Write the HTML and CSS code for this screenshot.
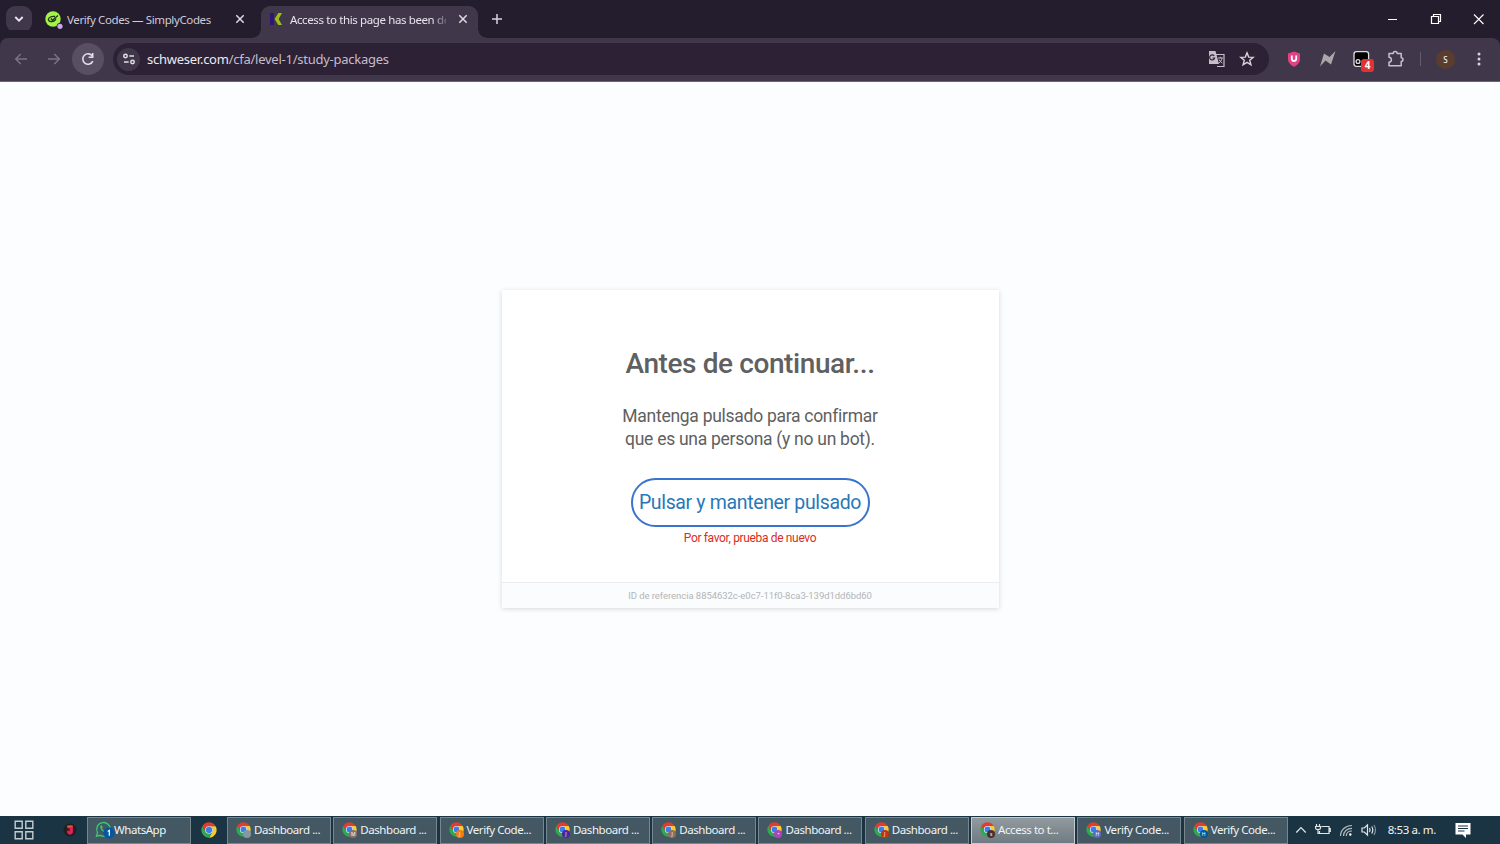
FILE: index.html
```html
<!DOCTYPE html>
<html lang="es">
<head>
    <meta charset="UTF-8">
    <meta name="viewport" content="width=device-width, initial-scale=1.0">
    <title>Access to this page has been denied</title>
    <link rel="stylesheet" href="styles.css">
</head>
<body>
    <svg class="defs" width="0" height="0">
        <symbol id="chrome" viewBox="0 0 48 48">
            <path d="M4.1 12.5A23 23 0 0 1 43.9 12.5H24A11.5 11.5 0 0 0 14 29.8Z" fill="#e33b2e"/>
            <path d="M43.9 12.5A23 23 0 0 1 24 47L34 29.7A11.5 11.5 0 0 0 24 12.5Z" fill="#fcc934"/>
            <path d="M24 47A23 23 0 0 1 4.1 12.5L14 29.8A11.5 11.5 0 0 0 34 29.7Z" fill="#2da94f"/>
            <circle cx="24" cy="24" r="11.5" fill="#fff"/>
            <circle cx="24" cy="24" r="9.500" fill="#3b7ded"/>
        </symbol>
        <symbol id="close" viewBox="0 0 10 10">
            <path d="M1.3 1.3l7.4 7.4M8.7 1.3L1.3 8.7" fill="none" stroke="#e0dae3" stroke-width="1.5"/>
        </symbol>
    </svg>

    <div class="tabs">
        <div class="tab-search">
            <svg width="10" height="8" viewBox="0 0 10 8"><path d="M1.3 2L5 5.7 8.7 2" fill="none" stroke="#ece6ef" stroke-width="1.8"/></svg>
        </div>
        <div class="tab">
            <svg class="favicon" width="18" height="18" viewBox="0 0 18 18">
                <circle cx="8" cy="8" r="7.7" fill="#a5f346"/>
                <path d="M10 5.5C6.5 5 3.6 6.3 3.4 8.4 3.3 11.6 9.8 11.4 11 7.6M5.8 7.5l1.6 1.8L13 4.6" fill="none" stroke="#223717" stroke-width="1.3"/>
                <circle cx="15" cy="15.3" r="3.2" fill="#241d2e"/>
                <circle cx="15" cy="15.3" r="2.6" fill="#c9a6ee"/>
            </svg>
            <span class="tab-title">Verify Codes — SimplyCodes</span>
            <svg class="tab-close" width="10" height="10"><use href="#close"/></svg>
        </div>
        <div class="tab active">
            <svg class="favicon" width="12" height="14" viewBox="0 0 12 14">
                <path d="M0 1h4v12H0z" fill="#2c1679"/>
                <path d="M8.3 1H12L8.6 7 12 13H8.3L4.6 7z" fill="#9dbd18"/>
            </svg>
            <span class="tab-title">Access to this page has been denied</span>
            <svg class="tab-close" width="10" height="10"><use href="#close"/></svg>
        </div>
        <svg class="new-tab" width="12" height="12" viewBox="0 0 12 12"><path d="M6 1v10M1 6h10" stroke="#d9d3dd" stroke-width="1.5"/></svg>
        <div class="window-buttons">
            <svg width="43" height="20" viewBox="0 0 43 20"><path d="M17 10.5h9" stroke="#fff"/></svg>
            <svg width="43" height="20" viewBox="0 0 43 20"><path d="M17.5 7.5h7v7h-7zM19.5 7.5v-2h7v7h-2" fill="none" stroke="#fff" stroke-width="1.2"/></svg>
            <svg width="43" height="20" viewBox="0 0 43 20"><path d="M17 5.5l9.5 9.5M26.5 5.5L17 15" stroke="#fff" stroke-width="1.1"/></svg>
        </div>
    </div>

    <div class="toolbar">
        <div class="nav-button">
            <svg width="14" height="12" viewBox="0 0 14 12"><path d="M13 6H2M6.7 1L1.7 6l5 5" fill="none" stroke="#7c7285" stroke-width="1.5"/></svg>
        </div>
        <div class="nav-button">
            <svg width="14" height="12" viewBox="0 0 14 12"><path d="M1 6h11M7.3 1l5 5-5 5" fill="none" stroke="#7c7285" stroke-width="1.5"/></svg>
        </div>
        <div class="nav-button reload">
            <svg width="14" height="14" viewBox="0 0 14 14"><path d="M11.8 9.1A5.2 5.2 0 1 1 11.4 4.2" fill="none" stroke="#e4dfe7" stroke-width="1.6"/><path d="M12.5 1v5H7.6V4.5h3.3V1z" fill="#e4dfe7"/></svg>
        </div>
        <div class="address">
            <div class="site-info">
                <svg width="12" height="12" viewBox="0 0 12 12" fill="none" stroke="#e4dfe7" stroke-width="1.5"><circle cx="2.5" cy="3" r="1.7"/><path d="M6.3 3H11M1 9h4.7"/><circle cx="9.5" cy="9" r="1.7"/></svg>
            </div>
            <span class="url"><b>schweser.com</b>/cfa/level-1/study-packages</span>
            <svg width="30" height="18" viewBox="0 0 30 18">
                <path d="M13 4.5h9v12h-7" fill="none" stroke="#c6bfca" stroke-width="1.2"/>
                <path d="M7 1h6.5l3.5 13H7z" fill="#c6bfca"/>
                <path d="M12.2 6A2.5 2.5 0 1 0 12.6 8H10.5" fill="none" stroke="#302638" stroke-width="1.2"/>
                <path d="M16 8h5M18.3 6.8V8M20 8c-.5 2.500-1.700 4-3 5M17 9.500c.7 1.500 2 2.700 3.300 3.500" fill="none" stroke="#c6bfca"/>
            </svg>
            <svg width="30" height="18" viewBox="0 0 30 18"><path d="M15 2.8l1.7 4.300 4.500.3-3.500 2.900 1.200 4.500L15 12.300l-3.900 2.500 1.200-4.500-3.500-2.900 4.500-.3z" fill="none" stroke="#d9d3dd" stroke-width="1.4"/></svg>
        </div>
        <div class="extensions">
            <svg width="34" height="24" viewBox="0 0 34 24">
                <path d="M17 4.500l6 2v5.500c0 3.800-3 6.500-6 7.700-3-1.200-6-3.900-6-7.700V6.500z" fill="#e64084"/>
                <path d="M14.800 8.500v3.200a2.200 2.200 0 0 0 4.400 0V8.500" fill="none" stroke="#fff" stroke-width="1.8"/>
            </svg>
            <svg width="34" height="24" viewBox="0 0 34 24"><path d="M9 19.500L13 6.500l5.500 3.500L24.500 4 20 17.500 14.500 13.500z" fill="#aaa6a9"/></svg>
            <div class="extension">
                <svg width="34" height="24" viewBox="0 0 34 24">
                    <rect x="9" y="4.700" width="14.600" height="14.600" rx="2.500" fill="#000" stroke="#ddd" stroke-width="1.3"/>
                    <circle cx="13" cy="14.500" r="1.900" fill="none" stroke="#ddd" stroke-width="1.3"/>
                </svg>
                <span class="count">4</span>
            </div>
            <svg width="34" height="24" viewBox="0 0 34 24"><path d="M10 6.500h4.200c0-2.800 4-2.800 4 0h4v4.300c2.400 0 2.400 3.600 0 3.600v4.300H10v-3.500c3.200-.5 3.200-4.600 0-5z" fill="none" stroke="#c8c1cd" stroke-width="1.5" stroke-linejoin="round"/></svg>
        </div>
        <span class="separator"></span>
        <span class="profile">S</span>
        <svg class="menu" width="4" height="14" viewBox="0 0 4 14" fill="#d9d3dd"><circle cx="2" cy="2" r="1.5"/><circle cx="2" cy="7" r="1.5"/><circle cx="2" cy="12" r="1.5"/></svg>
    </div>

    <main class="page">
        <div class="card">
            <div class="card-body">
                <h1>Antes de continuar...</h1>
                <p class="text">Mantenga pulsado para confirmar<br>que es una persona (y no un bot).</p>
                <button class="hold">Pulsar y mantener pulsado</button>
                <p class="error">Por favor, prueba de nuevo</p>
            </div>
            <div class="card-footer">ID de referencia 8854632c-e0c7-11f0-8ca3-139d1dd6bd60</div>
        </div>
    </main>

    <div class="taskbar">
        <svg class="start" width="20" height="20" viewBox="0 0 20 20" fill="none" stroke="#c5cdd1" stroke-width="1.4"><path d="M1.2 1.2h7v7h-7zM11.8 1.2h7v7h-7zM1.2 11.8h7v7h-7zM11.8 11.8h7v7h-7z"/></svg>
        <svg class="app-j" width="14" height="14" viewBox="0 0 14 14"><circle cx="7" cy="7" r="6.5" fill="#261d20"/><path d="M4.500 3H9.500v6.300c0 2.500-5 2.500-5 0V8h1.500v1h1V5H4.500z" fill="#df245b" stroke="#df245b" stroke-width=".8"/><path d="M4.500 2.600h5v1.200h-5z" fill="#ec6b2c"/></svg>
        <div class="task whatsapp">
            <svg width="20" height="18" viewBox="0 0 20 18">
                <path d="M1.5 15.300l1-3.700A6.800 6.800 0 1 1 5.200 14.300z" fill="none" stroke="#36c874" stroke-width="1.4"/>
                <path d="M5.500 4.800c.8-1 1.500-.5 2.200 1.400L7 7.400c.6 1.200 1.500 2 2.600 2.500l1-1c2 .8 2.200 1.300.8 2.300-2.500 1.200-7.500-3.500-5.900-6.400z" fill="#36c874"/>
                <circle cx="14" cy="12" r="5.700" fill="#0756a0"/>
                <path d="M12.700 10.400l1.600-1.100v5.400" fill="none" stroke="#fff" stroke-width="1.2"/>
            </svg>
            <span>WhatsApp</span>
        </div>
        <svg class="app-chrome" width="16" height="16"><use href="#chrome"/></svg>
        <div class="tasks">
            <div class="task"><i class="browser"><svg width="15" height="15"><use href="#chrome"/></svg><em class="gray"></em></i><span>Dashboard ...</span></div>
            <div class="task"><i class="browser"><svg width="15" height="15"><use href="#chrome"/></svg><em class="taupe">M</em></i><span>Dashboard ...</span></div>
            <div class="task"><i class="browser"><svg width="15" height="15"><use href="#chrome"/></svg><em class="orange">J</em></i><span>Verify Code...</span></div>
            <div class="task"><i class="browser"><svg width="15" height="15"><use href="#chrome"/></svg><em class="indigo">J</em></i><span>Dashboard ...</span></div>
            <div class="task"><i class="browser"><svg width="15" height="15"><use href="#chrome"/></svg><em class="taupe">J</em></i><span>Dashboard ...</span></div>
            <div class="task"><i class="browser"><svg width="15" height="15"><use href="#chrome"/></svg><em class="purple">•</em></i><span>Dashboard ...</span></div>
            <div class="task"><i class="browser"><svg width="15" height="15"><use href="#chrome"/></svg><em class="red">J</em></i><span>Dashboard ...</span></div>
            <div class="task current"><i class="browser"><svg width="15" height="15"><use href="#chrome"/></svg><em class="brown">s</em></i><span>Access to t...</span></div>
            <div class="task"><i class="browser"><svg width="15" height="15"><use href="#chrome"/></svg><em class="periwinkle">H</em></i><span>Verify Code...</span></div>
            <div class="task"><i class="browser"><svg width="15" height="15"><use href="#chrome"/></svg><em class="blue">H</em></i><span>Verify Code...</span></div>
        </div>
        <div class="tray">
            <svg width="12" height="16" viewBox="0 0 12 16"><path d="M1.300 10.500L6 5.700l4.700 4.800" fill="none" stroke="#e1e6e9" stroke-width="1.2"/></svg>
            <svg width="16" height="16" viewBox="0 0 16 16" fill="none" stroke="#e1e6e9"><path d="M6.500 4.500h7.500v7H4.500V9M14 6.500h1.300v3H14M1.500 2v2.500M4.500 2v2.500M.5 4.500h5v1.500c0 2-5 2-5 0zM3 7.500v4h3" stroke-width="1.2"/></svg>
            <svg width="14" height="16" viewBox="0 0 14 16" fill="none" stroke="#aebbc2" stroke-width="1.2"><path d="M1.500 14C1.500 8 6.500 3.500 13 3.500M4.500 14c0-4.500 3.500-7.700 8.500-7.700M7.300 14c0-3 2.200-5 5.700-5"/><circle cx="11.300" cy="12.500" r="1.2" fill="#fff" stroke="none"/></svg>
            <svg width="16" height="16" viewBox="0 0 16 16" fill="none" stroke="#e1e6e9" stroke-width="1.2"><path d="M1 6h2.300L6.500 3v10L3.300 10H1z"/><path d="M8.500 6q1.200 2 0 4M10.700 4.500q2.200 3.500 0 7"/><path d="M12.900 3q3.200 5 0 10" stroke="#82949e"/></svg>
        </div>
        <span class="clock">8:53 a. m.</span>
        <svg class="notifications" width="16" height="16" viewBox="0 0 16 16"><path d="M.5 1h15v11.500H11V16l-3.500-3.500h-7z" fill="#fff"/><path d="M3 4h10M3 6.500h10M3 9h6.500" stroke="#1d3442" stroke-width="1.1"/></svg>
    </div>
</body>
</html>
```
FILE: styles.css
```css
* {
    box-sizing: border-box;
}

body {
    margin: 0;
    height: 100vh;
    display: flex;
    flex-direction: column;
    overflow: hidden;
    background-color: #41374a;
    font-family: "Noto Sans", "Open Sans", sans-serif;
}

svg {
    flex-shrink: 0;
}

.defs {
    position: absolute;
}

/* Tab strip */
.tabs {
    display: flex;
    align-items: center;
    height: 38px;
    background-color: #241d2e;
}

.tab-search {
    display: flex;
    align-items: center;
    justify-content: center;
    width: 26px;
    height: 26px;
    margin-left: 6px;
    border-radius: 9px;
    background-color: #41374a;
}

.tab {
    display: flex;
    align-items: center;
    width: 217px;
    height: 32px;
    margin: 6px 0 0 5px;
    padding: 0 9px 6px 8px;
    color: #d1cad7;
    font-size: 11.5px;
}

.tab .favicon {
    margin: 2px 4px 0 0;
}

.tab-title {
    flex: 1;
    overflow: hidden;
    white-space: nowrap;
    letter-spacing: -0.38px;
}

.tab.active {
    position: relative;
    margin-left: 7px;
    padding: 0 10px 6px 9px;
    border-radius: 9px 9px 0 0;
    background-color: #41374a;
    color: #e8e3eb;
}

.tab.active::before,
.tab.active::after {
    content: "";
    position: absolute;
    bottom: 0;
    width: 9px;
    height: 9px;
}

.tab.active::before {
    left: -9px;
    background: radial-gradient(circle at 0 0, transparent 8.5px, #41374a 9px);
}

.tab.active::after {
    right: -9px;
    background: radial-gradient(circle at 100% 0, transparent 8.5px, #41374a 9px);
}

.tab.active .favicon {
    margin: 0 8px 0 0;
}

.tab.active .tab-title {
    -webkit-mask-image: linear-gradient(to right, #000 142px, transparent 160px);
    mask-image: linear-gradient(to right, #000 142px, transparent 160px);
}

.tab-close {
    margin-left: 12px;
}

.new-tab {
    margin-left: 13px;
}

.window-buttons {
    display: flex;
    margin-left: auto;
}

/* Toolbar */
.toolbar {
    display: flex;
    align-items: center;
    height: 44px;
    padding: 0 19px 1px 5px;
    border-bottom: 1px solid #6a6370;
    border-radius: 8px 8px 0 0;
    background-color: #41374a;
    box-shadow: 0 -8px 0 #241d2e;
}

.nav-button {
    display: flex;
    align-items: center;
    justify-content: center;
    width: 32px;
    height: 32px;
    margin-right: 1px;
    border-radius: 50%;
}

.reload {
    margin-left: 1px;
    background-color: #594f62;
}

.address {
    display: flex;
    align-items: center;
    width: 1156px;
    height: 32px;
    margin-left: 8px;
    padding: 0 7px 0 4px;
    border-radius: 16px;
    background-color: #2c2135;
}

.site-info {
    display: flex;
    align-items: center;
    justify-content: center;
    width: 23px;
    height: 23px;
    border-radius: 50%;
    background-color: #41374a;
}

.url {
    flex: 1;
    margin-left: 7px;
    color: #c5bdcb;
    font-size: 13px;
    letter-spacing: -0.25px;
}

.url b {
    color: #eee9f0;
    font-weight: normal;
}

.extensions {
    display: flex;
    margin-left: 8px;
}

.extension {
    position: relative;
    height: 24px;
}

.count {
    position: absolute;
    left: 16px;
    top: 12px;
    width: 13px;
    height: 13px;
    border-radius: 3px;
    background-color: #e23231;
    color: #fff;
    font-size: 10px;
    font-weight: bold;
    line-height: 13px;
    text-align: center;
}

.separator {
    width: 1px;
    height: 14px;
    margin-left: 7px;
    background-color: #655c6c;
}

.profile {
    width: 19px;
    height: 19px;
    margin: 0 auto 0 15px;
    border-radius: 50%;
    background-color: #5b3d30;
    color: #fff;
    font-size: 8px;
    line-height: 19px;
    text-align: center;
}

/* Challenge page */
.page {
    flex: 1;
    display: flex;
    align-items: center;
    justify-content: center;
    background-color: #fbfdff;
    font-family: Roboto, sans-serif;
}

.card {
    display: flex;
    flex-direction: column;
    width: 497px;
    height: 318px;
    background-color: #fff;
    box-shadow: 0 1px 5px rgba(0, 0, 0, 0.15);
    text-align: center;
}

.card-body {
    flex: 1;
    padding-top: 57px;
    color: #606060;
}

h1 {
    margin: 0;
    font-size: 28px;
    font-weight: 500;
    line-height: 34px;
    letter-spacing: -0.4px;
}

.text {
    margin: 24px 0 28px;
    font-size: 17.5px;
    line-height: 22.5px;
    letter-spacing: -0.28px;
}

.hold {
    display: block;
    width: 239px;
    height: 49px;
    margin: 0 auto;
    padding: 0;
    border: 2px solid #3974ce;
    border-radius: 25px;
    background-color: #fff;
    color: #2878b8;
    font-family: Roboto, sans-serif;
    font-size: 19.5px;
    letter-spacing: -0.35px;
    white-space: nowrap;
}

.error {
    margin: 3px 0 0;
    color: #dc2c22;
    font-size: 12px;
    line-height: 16px;
    letter-spacing: -0.35px;
}

.card-footer {
    height: 26px;
    border-top: 1px solid #ebedef;
    background-color: #fafcfe;
    color: #b4b5b7;
    font-size: 9.5px;
    line-height: 26px;
    letter-spacing: -0.05px;
}

/* Windows taskbar */
.taskbar {
    display: flex;
    align-items: center;
    height: 28px;
    background-color: #1b3443;
    color: #f1f4f5;
    font-size: 11.5px;
}

.start {
    margin-left: 14px;
}

.app-j {
    margin-left: 29px;
}

.task {
    display: flex;
    align-items: center;
    width: 104px;
    height: 27px;
    padding: 0 0 1px 8px;
    border: 1px solid #78868e;
    background-color: #445863;
    white-space: nowrap;
    letter-spacing: -0.44px;
}

.whatsapp {
    margin-left: 10px;
    padding-left: 7px;
}

.whatsapp span {
    margin-left: -1px;
}

.app-chrome {
    margin: 0 10px;
}

.tasks {
    display: flex;
    gap: 2.3px;
}

.current {
    border-color: #c5cbce;
    background: linear-gradient(#919a9f, #6f7b82);
}

.browser {
    position: relative;
    width: 15px;
    height: 15px;
    margin-right: 3px;
}

.browser svg {
    display: block;
}

.browser em {
    position: absolute;
    left: 7px;
    top: 8px;
    width: 8px;
    height: 8px;
    border-radius: 50%;
    color: #fff;
    font-size: 5px;
    font-style: normal;
    line-height: 8px;
    text-align: center;
    letter-spacing: 0;
}

.gray { background-color: #8598a2; }
.taupe { background-color: #8d6e63; }
.orange { background-color: #f57c12; }
.indigo { background-color: #4527a0; }
.purple { background-color: #ab47bc; }
.red { background-color: #bf360c; }
.brown { background-color: #4b302a; }
.periwinkle { background-color: #5c6bc0; }
.blue { background-color: #02579b; }

.tray {
    display: flex;
    gap: 8px;
    margin-left: 7px;
}

.clock {
    margin-left: 11px;
    padding-bottom: 1px;
    letter-spacing: -0.4px;
}

.notifications {
    margin: 0 29px 0 auto;
}
```
